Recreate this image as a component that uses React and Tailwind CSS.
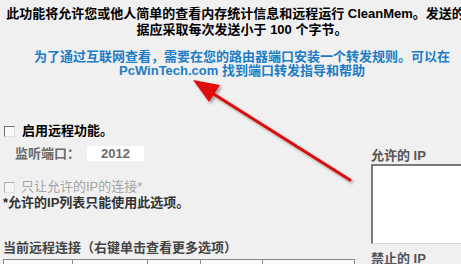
import React from 'react';

const FONT = "font-['Liberation_Sans','Noto_Sans_CJK_SC',sans-serif]";

const Check = ({ disabled }) => (
  <span
    className={`inline-block w-[11px] h-[11px] border-t border-l ${
      disabled ? 'border-[#b0b0b0] bg-[#f4f4f4]' : 'border-[#707070] bg-[#f8f8f8]'
    } border-b border-r border-b-[#e0e0e0] border-r-[#e0e0e0]`}
  />
);

const columns = [69, 75, 53, 62, 93];

const Arrow = () => (
  <svg className="absolute left-0 top-0 pointer-events-none" width="461" height="264">
    <defs>
      <filter id="sh" x="-10%" y="-10%" width="130%" height="130%">
        <feDropShadow dx="2" dy="2" stdDeviation="1.5" floodColor="#000" floodOpacity="0.35" />
      </filter>
    </defs>
    <g filter="url(#sh)">
      <line x1="350" y1="180" x2="212" y2="93" stroke="#d81010" strokeWidth="3" strokeLinecap="round" />
      <polygon points="193,80 220,85 209,102" fill="#e01010" />
    </g>
  </svg>
);

export default function App() {
  return (
    <div className={`relative w-[461px] h-[264px] overflow-hidden bg-[#f0f0f0] ${FONT} text-[13px]`}>
      <div className="w-[484px] text-center pt-[6px]">
        <div className="font-bold text-black leading-[16px] whitespace-nowrap">
          此功能将允许您或他人简单的查看内存统计信息和远程运行 CleanMem。发送的数
          <br />
          据应采取每次发送小于 100 个字节。
        </div>
        <div className="mt-[12px] font-bold text-[#1c7cc6] leading-[14px] whitespace-nowrap">
          为了通过互联网查看，需要在您的路由器端口安装一个转发规则。可以在
          <br />
          PcWinTech.com 找到端口转发指导和帮助
        </div>
      </div>

      <div className="flex items-start">
        <div className="w-[371px] shrink-0 pt-[46px]">
          <div className="flex items-center h-[14px] pl-[4px] gap-[7px]">
            <Check />
            <span className="font-bold text-black leading-[14px]">启用远程功能。</span>
          </div>
          <div className="flex items-center h-[15px] mt-[8px] pl-[15px]">
            <span className="font-bold text-[#6a6a6a] w-[72px] leading-[14px]">监听端口：</span>
            <span className="w-[57px] h-[15px] bg-white text-center font-bold text-[#6a6a6a] leading-[15px]">2012</span>
          </div>
          <div className="flex items-center h-[14px] mt-[19px] pl-[4px] gap-[6px]">
            <Check disabled />
            <span className="text-[#a4a4a4] leading-[14px]">只让允许的IP的连接*</span>
          </div>
          <div className="mt-[2px] pl-[3px] font-bold text-[#333] leading-[14px]">*允许的IP列表只能使用此选项。</div>
          <div className="mt-[31px] pl-[3px] font-bold text-[#444] leading-[14px]">当前远程连接（右键单击查看更多选项）</div>
          <div className="mt-[4px] ml-[3px] flex">
            {columns.map((w, i) => (
              <div
                key={i}
                style={{ width: w }}
                className="h-[20px] border border-[#8a8a8a] border-r-0 last:border-r bg-[#fafafa]"
              />
            ))}
          </div>
        </div>

        <div className="shrink-0 pt-[71px]">
          <div className="font-bold text-[#555] leading-[14px]">允许的 IP</div>
          <div className="mt-[1px] w-[120px] h-[80px] bg-white border-t-2 border-l-2 border-t-[#7a7a7a] border-l-[#7a7a7a] border-b border-b-[#d8d8d8]" />
          <div className="mt-[8px] font-bold text-[#555] leading-[14px]">禁止的 IP</div>
        </div>
      </div>

      <Arrow />
    </div>
  );
}
